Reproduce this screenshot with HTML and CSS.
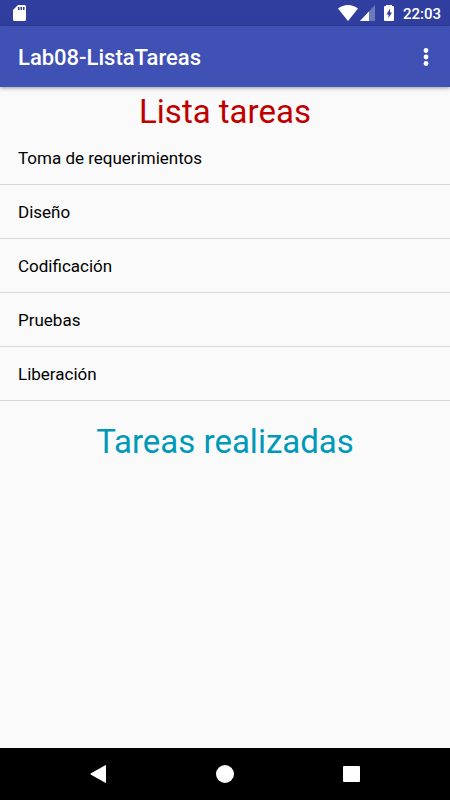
FILE: index.html
```html
<!DOCTYPE html>
<html lang="es">
<head>
    <meta charset="UTF-8">
    <meta name="viewport" content="width=device-width, initial-scale=1.0">
    <title>Lab08-ListaTareas</title>
    <link rel="stylesheet" href="styles.css">
</head>
<body>

    <div class="status-bar">
        <svg class="sd-card" width="13" height="16" viewBox="0 0 13 16">
            <path fill="#fff" d="M5 0h6.500a1.500 1.500 0 0 1 1.500 1.500v13a1.500 1.500 0 0 1-1.500 1.500h-10A1.500 1.500 0 0 1 0 14.500V5z"/>
            <path fill="#303f9f" d="M5 2h1.500v3H5zM7.500 2H9v3H7.500zM10 2h1.500v3H10z"/>
        </svg>
        <svg class="wifi" width="20" height="16" viewBox="0 0 20 16">
            <path fill="#fff" d="M0 3.500Q4.500 0 10 0t10 3.500L10 16z"/>
        </svg>
        <svg class="signal" width="15" height="16" viewBox="0 0 15 16">
            <path fill="#fff" fill-opacity=".3" d="M15 0v16H0z"/>
            <path fill="#fff" d="M9 6.400V16H0z"/>
        </svg>
        <svg class="battery" width="10" height="16" viewBox="0 0 10 16">
            <path fill="#fff" d="M2 0h6v1h1a1 1 0 0 1 1 1v13a1 1 0 0 1-1 1H1a1 1 0 0 1-1-1V2a1 1 0 0 1 1-1h1z"/>
            <path fill="#303f9f" d="M6 3.500v4h2L4.500 13V9.500H2.500z"/>
        </svg>
        <span class="clock">22:03</span>
    </div>

    <header class="app-bar">
        <h1>Lab08-ListaTareas</h1>
        <button type="button" class="menu-button" aria-label="Más opciones">
            <svg width="6" height="18" viewBox="0 0 6 18">
                <g fill="#fff">
                    <circle cx="3" cy="2.500" r="2.400"/>
                    <circle cx="3" cy="9" r="2.400"/>
                    <circle cx="3" cy="15.500" r="2.400"/>
                </g>
            </svg>
        </button>
    </header>

    <main>
        <h2 class="pending-title">Lista tareas</h2>
        <ul class="task-list">
            <li>Toma de requerimientos</li>
            <li>Diseño</li>
            <li>Codificación</li>
            <li>Pruebas</li>
            <li>Liberación</li>
        </ul>
        <h2 class="done-title">Tareas realizadas</h2>
    </main>

    <nav class="nav-bar">
        <button type="button" aria-label="Atrás">
            <svg width="18" height="18" viewBox="0 0 18 18">
                <path fill="#fff" d="M16 .5v17q0 .7-.7.300L1 9.700Q0 9 1 8.300L15.300.2q.7-.4.7.300z"/>
            </svg>
        </button>
        <button type="button" aria-label="Inicio">
            <svg width="18" height="18" viewBox="0 0 18 18">
                <circle fill="#fff" cx="9" cy="9" r="9"/>
            </svg>
        </button>
        <button type="button" aria-label="Recientes">
            <svg width="18" height="18" viewBox="0 0 18 18">
                <rect fill="#fff" x="1" y="1" width="17" height="16" rx="1"/>
            </svg>
        </button>
    </nav>

</body>
</html>
```
FILE: styles.css
```css
* {
    box-sizing: border-box;
}
body {
    margin: 0;
    min-height: 100vh;
    display: flex;
    flex-direction: column;
    font-family: Roboto, sans-serif;
    background-color: #fafafa;
    color: #000;
}
h1, h2 {
    margin: 0;
}
button {
    display: flex;
    align-items: center;
    justify-content: center;
    padding: 0;
    border: none;
    background: none;
    cursor: pointer;
}

/* Barra de estado */
.status-bar {
    display: flex;
    align-items: center;
    height: 26px;
    padding: 0 9px 0 13px;
    background-color: #303f9f;
    color: #fff;
}
.sd-card {
    margin-right: auto;
}
.signal {
    margin: 0 9px 0 2px;
}
.clock {
    margin-left: 9px;
    padding-top: 2px;
    font-size: 15px;
    font-weight: 500;
    line-height: 24px;
}

/* Barra de la aplicación */
.app-bar {
    display: flex;
    align-items: center;
    justify-content: space-between;
    height: 61px;
    padding-left: 18px;
    background-color: #3f51b5;
    box-shadow: 0 1px 4px rgba(0, 0, 0, 0.4);
}
.app-bar h1 {
    padding-top: 2px;
    color: #fff;
    font-size: 22px;
    font-weight: 500;
    line-height: 32px;
}
.menu-button {
    width: 48px;
    height: 48px;
}

/* Contenido */
main {
    flex: 1;
}
main h2 {
    font-size: 33px;
    font-weight: 400;
    line-height: 38px;
    text-align: center;
}
.pending-title {
    padding-top: 6px;
    color: #c00000;
}
.done-title {
    padding-top: 22px;
    color: #0099b8;
}
.task-list {
    margin: 0;
    padding: 0;
    list-style: none;
}
.task-list li {
    padding: 2px 18px 0;
    border-bottom: 1px solid #d8d8d8;
    font-size: 17px;
    line-height: 51px;
}

/* Barra de navegación */
.nav-bar {
    display: flex;
    justify-content: center;
    gap: 78px;
    height: 52px;
    background-color: #000;
}
.nav-bar button {
    width: 48px;
}
```
